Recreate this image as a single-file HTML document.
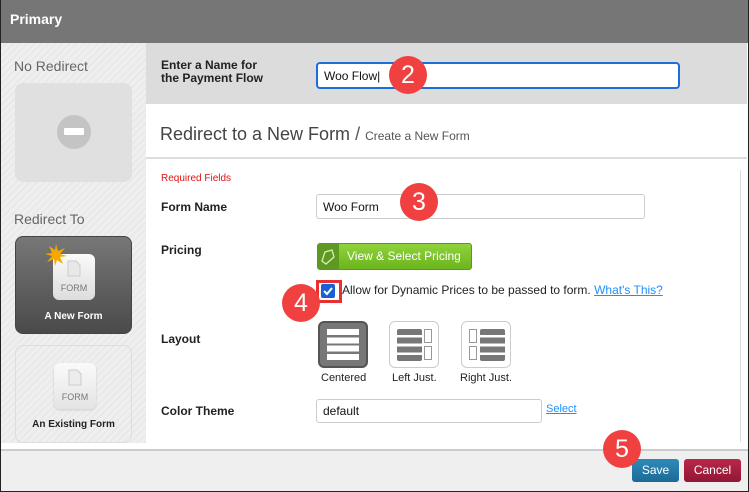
<!DOCTYPE html>
<html><head><meta charset="utf-8"><style>
*{box-sizing:border-box;margin:0;padding:0}
body{width:749px;height:492px;overflow:hidden;font-family:"Liberation Sans",Verdana,sans-serif;background:#fff;position:relative}
.frame{position:absolute;left:0;top:0;width:749px;height:492px;border:1px solid #222;border-top:none}
.hdr{position:absolute;left:0;top:0;width:749px;height:43px;background:#767676;color:#fff;font-weight:bold;font-size:14px;padding:11px 0 0 10px}
.side{position:absolute;left:1px;top:43px;width:145px;height:400px;background:repeating-linear-gradient(135deg,#efefef 0 3px,#e9e9e9 3px 5px)}
.side .lbl{position:absolute;left:13px;font-size:14px;color:#666}
.tile{position:absolute;left:14px;width:117px;border-radius:8px}
.band{position:absolute;left:146px;top:43px;width:601px;height:61px;background:#dcdcdc}
.b{font-weight:bold;font-size:12px;color:#222;position:absolute}
.inp{position:absolute;background:#fff;border:1px solid #ccc;border-radius:3px;font-size:12px;color:#111;padding:0 6px;display:flex;align-items:center}
.badge{position:absolute;width:38px;height:38px;border-radius:50%;background:#f04040;color:#fff;font-size:25px;text-align:center;line-height:38px}
.lay{position:absolute;top:321px;width:50px;height:47px;border-radius:6px}
.cap{position:absolute;top:372px;font-size:11px;color:#222}
.foot{position:absolute;left:1px;top:449px;width:747px;height:42px;background:#efefef;border-top:2px solid #ccc}
.btn{position:absolute;top:459px;height:23px;border-radius:3px;color:#fff;font-size:12px;text-align:center;line-height:23px}
.pg{position:absolute;left:14px;top:6px}
a{color:#1e90ff}
</style></head><body>
<div class="hdr">Primary</div>
<div class="side">
 <div class="lbl" style="top:15px">No Redirect</div>
 <div class="tile" style="top:40px;height:99px;background:#e0e0e0">
  <div style="position:absolute;left:42px;top:32px;width:34px;height:34px;border-radius:50%;background:#c4c4c4"><div style="position:absolute;left:7px;top:13px;width:20px;height:7px;background:#fff;border-radius:1px"></div></div>
 </div>
 <div class="lbl" style="top:168px">Redirect To</div>
 <div class="tile" style="top:193px;height:98px;background:linear-gradient(#777,#4a4a4a);border:1px solid #444">
  <div style="position:absolute;left:37px;top:17px;width:42px;height:46px;border-radius:6px;background:linear-gradient(#fafafa,#ddd);font-size:9px;color:#777;text-align:center;padding-top:29px">FORM<svg class="pg" width="14" height="17" viewBox="0 0 14 17"><path d="M1 1H9L13 5V16H1Z" fill="#e8e8e8" stroke="#ccc"/></svg></div>
  <svg style="position:absolute;left:29px;top:7px" width="22" height="22" viewBox="0 0 22 22"><path d="M11 0L13 7 20 4 15 10 22 12 15 13 18 20 12 16 10 22 9 15 2 18 7 12 0 10 7 9 4 2 10 6Z" fill="#f6a800"/></svg>
  <div style="position:absolute;left:0;width:100%;top:74px;text-align:center;color:#fff;font-weight:bold;font-size:10px">A New Form</div>
 </div>
 <div class="tile" style="top:302px;height:98px;border:1px solid #ddd">
  <div style="position:absolute;left:38px;top:17px;width:42px;height:46px;border-radius:6px;background:linear-gradient(#fafafa,#e4e4e4);box-shadow:0 1px 2px #ccc;font-size:9px;color:#777;text-align:center;padding-top:29px">FORM<svg class="pg" width="14" height="17" viewBox="0 0 14 17"><path d="M1 1H9L13 5V16H1Z" fill="#ececec" stroke="#ccc"/></svg></div>
  <div style="position:absolute;left:0;width:100%;top:73px;text-align:center;color:#222;font-weight:bold;font-size:10px">An Existing Form</div>
 </div>
</div>
<div class="band"></div>
<div class="b" style="left:161px;top:59px;line-height:13px">Enter a Name for<br>the Payment Flow</div>
<div class="inp" style="left:316px;top:62px;width:364px;height:27px;border:2px solid #1c6fd8;border-radius:4px">Woo Flow|</div>
<div style="position:absolute;left:160px;top:124px;font-size:18px;color:#444">Redirect to a New Form <span style="color:#555">/</span> <span style="font-size:12px;color:#555">Create a New Form</span></div>
<div style="position:absolute;left:146px;top:157px;width:601px;height:2px;background:#ddd"></div>
<div style="position:absolute;left:740px;top:170px;width:1px;height:272px;background:#ddd"></div>
<div style="position:absolute;left:161px;top:173px;font-size:10px;color:#e01010">Required Fields</div>
<div class="b" style="left:161px;top:200px">Form Name</div>
<div class="inp" style="left:316px;top:194px;width:329px;height:25px">Woo Form</div>
<div class="b" style="left:161px;top:243px">Pricing</div>
<div style="position:absolute;left:317px;top:243px;width:155px;height:27px;border-radius:3px;background:linear-gradient(#8fd23c,#6bb51d);border:1px solid #5a9a18;color:#fff;font-size:12px;line-height:25px;padding-left:29px">View &amp; Select Pricing
 <div style="position:absolute;left:0;top:0;width:21px;height:25px;background:#5e9a22;border-radius:2px 0 0 2px"><svg width="21" height="25" viewBox="0 0 21 25"><path d="M14 6L7 8 4 17 8 20 16 13Z" fill="none" stroke="#d8efb8" stroke-width="1.3"/></svg></div></div>
<div style="position:absolute;left:316px;top:280px;width:26px;height:23px;border:3px solid #e83030"></div>
<div style="position:absolute;left:321px;top:284px;width:14px;height:14px;background:#1a5fd6;border-radius:2px"><svg width="14" height="14"><path d="M3 7l3 3 5-6" stroke="#fff" stroke-width="2" fill="none"/></svg></div>
<div style="position:absolute;left:342px;top:283px;font-size:12px;color:#222">Allow for Dynamic Prices to be passed to form. <a style="text-decoration:underline">What's This?</a></div>
<div class="b" style="left:161px;top:332px">Layout</div>
<div class="lay" style="left:318px;background:#777;border:2px solid #555">
 <div style="position:absolute;left:7px;top:6px;width:32px;height:31px;background:repeating-linear-gradient(#fff 0 6px,#777 6px 8.3px)"></div></div>
<div class="lay" style="left:389px;border:1px solid #ccc;background:#fff">
 <div style="position:absolute;left:7px;top:7px;width:25px;height:32px;background:repeating-linear-gradient(#777 0 6px,#fff 6px 8.7px);border-radius:2px"></div>
 <div style="position:absolute;left:34px;top:7px;width:8px;height:14px;border:1px solid #999"></div><div style="position:absolute;left:34px;top:24px;width:8px;height:14px;border:1px solid #999"></div></div>
<div class="lay" style="left:461px;border:1px solid #ccc;background:#fff">
 <div style="position:absolute;left:7px;top:7px;width:8px;height:14px;border:1px solid #999"></div><div style="position:absolute;left:7px;top:24px;width:8px;height:14px;border:1px solid #999"></div>
 <div style="position:absolute;left:18px;top:7px;width:25px;height:32px;background:repeating-linear-gradient(#777 0 6px,#fff 6px 8.7px);border-radius:2px"></div></div>
<div class="cap" style="left:321px">Centered</div>
<div class="cap" style="left:392px">Left Just.</div>
<div class="cap" style="left:460px">Right Just.</div>
<div class="b" style="left:161px;top:404px">Color Theme</div>
<div class="inp" style="left:316px;top:399px;width:226px;height:24px">default</div>
<a style="position:absolute;left:546px;top:403px;font-size:11px;text-decoration:underline">Select</a>
<div class="foot"></div>
<div class="btn" style="left:632px;width:47px;background:linear-gradient(#2f8ab8,#1b6a96)">Save</div>
<div class="btn" style="left:684px;width:57px;background:linear-gradient(#b8284a,#921636)">Cancel</div>
<div class="badge" style="left:389px;top:56px">2</div>
<div class="badge" style="left:400px;top:183px">3</div>
<div class="badge" style="left:282px;top:284px">4</div>
<div class="badge" style="left:603px;top:430px">5</div>
<div class="frame"></div>
</body></html>
